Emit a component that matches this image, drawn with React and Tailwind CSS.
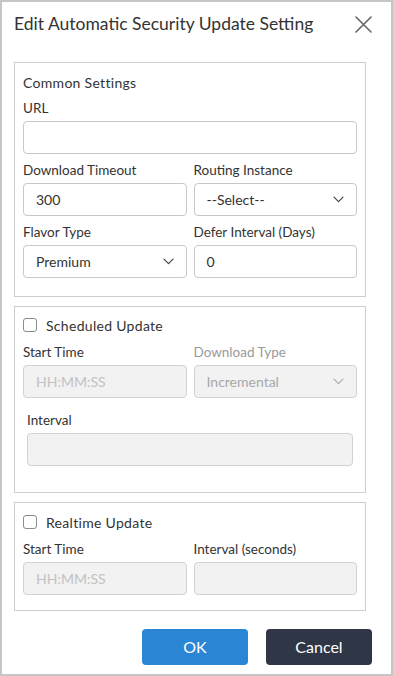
import React from 'react';

const font = { fontFamily: 'Lato, "Open Sans", sans-serif' };

function Chevron({ muted }) {
    return (
        <svg width="11" height="7" viewBox="0 0 11 7" fill="none" className={muted ? 'text-[#aaa]' : 'text-[#444]'}>
            <path d="M1 1.2l4.5 4.5 4.5-4.5" stroke="currentColor" strokeWidth="1.2" strokeLinecap="round" strokeLinejoin="round" />
        </svg>
    );
}

function Label({ children, muted, className = '' }) {
    return (
        <div className={`h-5 leading-5 text-[13.5px] ${muted ? 'text-[#9a9a9a]' : 'text-[#333]'} ${className}`}>
            {children}
        </div>
    );
}

function TextBox({ value, placeholder, disabled }) {
    return (
        <div
            className={`mt-[3px] h-[33px] rounded-[4px] border flex items-center px-3 text-[14px] ${
                disabled ? 'bg-[#f2f2f2] border-[#d2d2d2]' : 'bg-white border-[#c8c8c8]'
            }`}
        >
            {value ? (
                <span className="text-[#333]">{value}</span>
            ) : (
                <span className="text-[#c2c2c2]">{placeholder}</span>
            )}
        </div>
    );
}

function SelectBox({ value, disabled }) {
    return (
        <div
            className={`mt-[3px] h-[33px] rounded-[4px] border flex items-center justify-between pl-3 pr-[12px] text-[14px] ${
                disabled ? 'bg-[#f2f2f2] border-[#d2d2d2] text-[#a8a8a8]' : 'bg-white border-[#c8c8c8] text-[#333]'
            }`}
        >
            <span>{value}</span>
            <Chevron muted={disabled} />
        </div>
    );
}

function Check({ label }) {
    return (
        <div className="flex items-center h-5 gap-[9px]">
            <span className="w-[14px] h-[14px] rounded-[3px] border border-[#8a8a8a] bg-white" />
            <span className="text-[14px] text-[#333] tracking-[0.3px]">{label}</span>
        </div>
    );
}

export default function App() {
    return (
        <div style={font} className="w-[393px] h-[676px] border-2 border-[#c6c6c6] bg-white flex flex-col">
            {/* Header */}
            <div className="flex items-center justify-between pl-3 pr-[19px] h-[42px] pt-[2px]">
                <h1 className="text-[17.5px] text-[#333] font-normal">Edit Automatic Security Update Setting</h1>
                <svg width="17" height="17" viewBox="0 0 17 17" className="text-[#666]">
                    <path d="M1 1l15 15M16 1L1 16" stroke="currentColor" strokeWidth="1.6" strokeLinecap="round" />
                </svg>
            </div>

            <div className="ml-3 mr-[25px] mt-[18px] flex flex-col gap-[9px]">
                {/* Common settings */}
                <section className="border border-[#cdcdcd] px-2 pt-[10px] pb-[18px]">
                    <div className="h-5 leading-5 text-[14px] text-[#333] tracking-[0.3px]">Common Settings</div>
                    <Label className="mt-[5px]">URL</Label>
                    <TextBox />
                    <div className="grid grid-cols-2 gap-x-[7px]">
                        <div>
                            <Label className="mt-[6px]">Download Timeout</Label>
                            <TextBox value="300" />
                        </div>
                        <div>
                            <Label className="mt-[6px]">Routing Instance</Label>
                            <SelectBox value="--Select--" />
                        </div>
                        <div>
                            <Label className="mt-[6px]">Flavor Type</Label>
                            <SelectBox value="Premium" />
                        </div>
                        <div>
                            <Label className="mt-[6px]">Defer Interval (Days)</Label>
                            <TextBox value="0" />
                        </div>
                    </div>
                </section>

                {/* Scheduled update */}
                <section className="border border-[#cdcdcd] px-2 pt-[8px] pb-[26px]">
                    <Check label="Scheduled Update" />
                    <div className="grid grid-cols-2 gap-x-[7px] mt-[7px]">
                        <div>
                            <Label>Start Time</Label>
                            <TextBox placeholder="HH:MM:SS" disabled />
                        </div>
                        <div>
                            <Label muted>Download Type</Label>
                            <SelectBox value="Incremental" disabled />
                        </div>
                    </div>
                    <div className="px-1 mt-[12px]">
                        <Label>Interval</Label>
                        <TextBox disabled />
                    </div>
                </section>

                {/* Realtime update */}
                <section className="border border-[#cdcdcd] px-2 pt-[9px] pb-[15px]">
                    <Check label="Realtime Update" />
                    <div className="grid grid-cols-2 gap-x-[7px] mt-[7px]">
                        <div>
                            <Label>Start Time</Label>
                            <TextBox placeholder="HH:MM:SS" disabled />
                        </div>
                        <div>
                            <Label>Interval (seconds)</Label>
                            <TextBox disabled />
                        </div>
                    </div>
                </section>
            </div>

            {/* Footer */}
            <div className="flex justify-end gap-[18px] pr-[19px] mt-auto mb-[9px]">
                <button className="w-[106px] h-[36px] rounded-[4px] bg-[#2a86d5] text-white text-[16px]">OK</button>
                <button className="w-[106px] h-[36px] rounded-[4px] bg-[#2f3646] text-white text-[16px]">Cancel</button>
            </div>
        </div>
    );
}
